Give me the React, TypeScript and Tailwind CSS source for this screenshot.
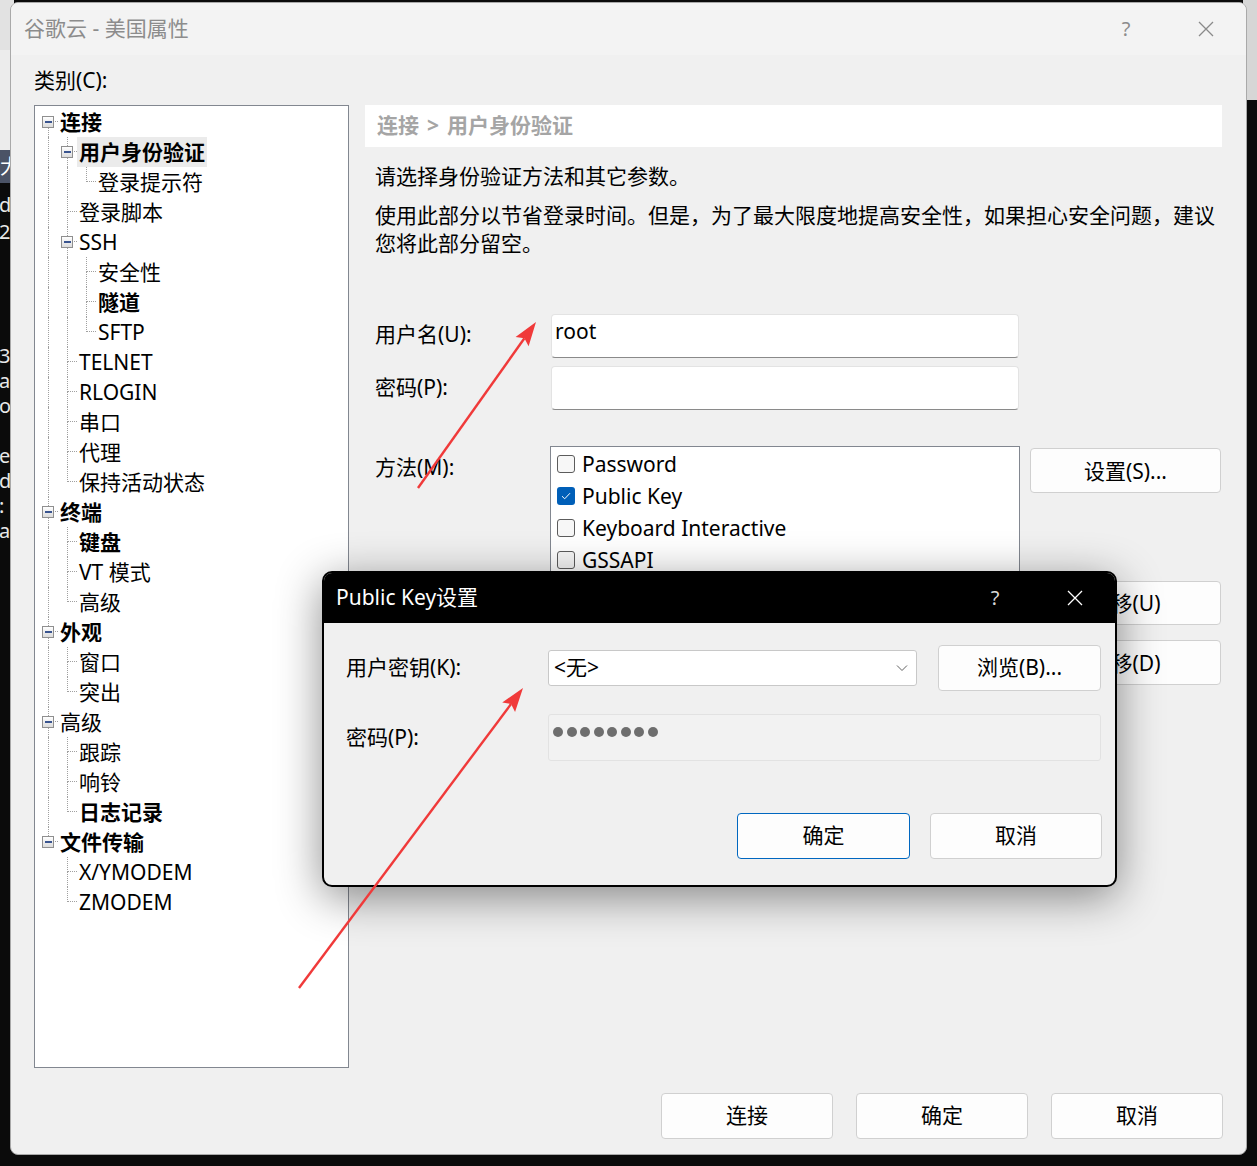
import type { ReactNode } from "react"

// SecureCRT-style session properties window with the "Public Key设置" sub-dialog on top.

const FONT = "font-['Noto_Sans','Noto_Sans_CJK_SC',sans-serif]"

type TreeNode = { label: string; bold?: boolean; selected?: boolean; children?: TreeNode[] }
type Row = { node: TreeNode; depth: number; hasNext: boolean; firstRoot: boolean; trail: boolean[] }

const tree: TreeNode[] = [
  {
    label: "连接",
    bold: true,
    children: [
      { label: "用户身份验证", bold: true, selected: true, children: [{ label: "登录提示符" }] },
      { label: "登录脚本" },
      { label: "SSH", children: [{ label: "安全性" }, { label: "隧道", bold: true }, { label: "SFTP" }] },
      { label: "TELNET" },
      { label: "RLOGIN" },
      { label: "串口" },
      { label: "代理" },
      { label: "保持活动状态" },
    ],
  },
  { label: "终端", bold: true, children: [{ label: "键盘", bold: true }, { label: "VT 模式" }, { label: "高级" }] },
  { label: "外观", bold: true, children: [{ label: "窗口" }, { label: "突出" }] },
  { label: "高级", children: [{ label: "跟踪" }, { label: "响铃" }, { label: "日志记录", bold: true }] },
  { label: "文件传输", bold: true, children: [{ label: "X/YMODEM" }, { label: "ZMODEM" }] },
]

function flatten(nodes: TreeNode[], depth: number, trail: boolean[], out: Row[]) {
  nodes.forEach((node, i) => {
    const hasNext = i < nodes.length - 1
    out.push({ node, depth, hasNext, firstRoot: depth === 0 && i === 0, trail })
    if (node.children) flatten(node.children, depth + 1, [...trail, hasNext], out)
  })
  return out
}

const rows = flatten(tree, 0, [], [])

function ExpandBox() {
  return (
    <div className="absolute left-[3px] top-[9px] flex h-[12px] w-[12px] items-center justify-center border border-[#8f8f8f] bg-gradient-to-b from-white to-[#dcdcdc]">
      <div className="h-[1.5px] w-[7px] bg-[#3a5590]" />
    </div>
  )
}

function TreeRow({ row }: { row: Row }) {
  const { node } = row
  return (
    <div className="flex h-[30px]">
      {row.trail.map((cont, i) => (
        <div key={i} className="w-[19px] shrink-0">
          {cont && <div className="ml-[9px] h-full border-l border-dotted border-[#a0a0a0]" />}
        </div>
      ))}
      <div className="relative w-[19px] shrink-0">
        <div
          className={`ml-[9px] h-[15px] border-b border-dotted border-[#a0a0a0] ${row.firstRoot ? "" : "border-l"}`}
        />
        {row.hasNext && <div className="ml-[9px] h-[15px] border-l border-dotted border-[#a0a0a0]" />}
        {node.children && <ExpandBox />}
      </div>
      <span
        className={`h-[30px] whitespace-nowrap px-[2px] text-[21px] leading-[30px] text-black ${
          node.bold ? "font-bold" : ""
        } ${node.selected ? "bg-[#ebebeb]" : ""}`}
      >
        {node.label}
      </span>
    </div>
  )
}

function CloseIcon({ color, size = 16 }: { color: string; size?: number }) {
  return (
    <svg width={size} height={size} viewBox="0 0 16 16" fill="none">
      <path d="M1 1L15 15M15 1L1 15" stroke={color} strokeWidth="1.3" />
    </svg>
  )
}

function Button({ children, className = "", primary = false }: { children: ReactNode; className?: string; primary?: boolean }) {
  return (
    <button
      className={`flex items-center justify-center rounded-[4px] border bg-[#fdfdfd] text-[21px] text-black ${
        primary ? "border-[#0067c0]" : "border-[#d0d0d0]"
      } ${className}`}
    >
      {children}
    </button>
  )
}

function Checkbox({ checked }: { checked?: boolean }) {
  return checked ? (
    <span className="flex h-[18px] w-[18px] items-center justify-center rounded-[3px] bg-[#005fb8]">
      <svg width="10" height="8" viewBox="0 0 10 8" fill="none">
        <path d="M1 4.2L3.7 6.8L9 1.2" stroke="white" strokeWidth="1" />
      </svg>
    </span>
  ) : (
    <span className="h-[18px] w-[18px] rounded-[3px] border border-[#5c5c5c] bg-[#f7f7f7]" />
  )
}

function Arrow({ x1, y1, x2, y2 }: { x1: number; y1: number; x2: number; y2: number }) {
  const len = Math.hypot(x2 - x1, y2 - y1)
  const ux = (x2 - x1) / len
  const uy = (y2 - y1) / len
  const bx = x2 - ux * 24
  const by = y2 - uy * 24
  const nx = -uy
  const ny = ux
  const head = `${x2},${y2} ${bx + nx * 8},${by + ny * 8} ${x2 - ux * 20},${y2 - uy * 20} ${bx - nx * 8},${by - ny * 8}`
  return (
    <g>
      <line x1={x1} y1={y1} x2={x2 - ux * 20} y2={y2 - uy * 20} stroke="#f03a3a" strokeWidth="2.4" />
      <polygon points={head} fill="#f03a3a" />
    </g>
  )
}

const termBits: [number, string][] = [
  [205, "d"],
  [232, "2("],
  [356, "34"],
  [381, "al"],
  [406, "o("],
  [456, "er"],
  [481, "d"],
  [506, ":"],
  [531, "a"],
]

export default function App() {
  return (
    <div className={`relative h-[1166px] w-[1257px] overflow-hidden bg-[#0b0b0b] ${FONT}`}>
      {/* desktop behind the window */}
      <div className="absolute left-0 top-0 h-[50px] w-[14px] bg-[#e2e2e2]" />
      <div className="absolute left-0 top-[50px] h-[100px] w-[14px] bg-[#ececec]" />
      <div className="absolute left-0 top-[150px] flex h-[33px] w-[14px] items-center bg-[#4b5366] text-[20px] text-white">
        大
      </div>
      {termBits.map(([y, t]) => (
        <span key={y} className="absolute left-[-1px] text-[20px] leading-[24px] text-[#e8e8e8]" style={{ top: y - 12 }}>
          {t}
        </span>
      ))}
      <div className="absolute right-0 top-0 h-[100px] w-[14px] bg-[#d6d6d6]" />

      {/* main properties window */}
      <div className="absolute left-[10px] top-[2px] flex h-[1153px] w-[1237px] flex-col overflow-hidden rounded-[8px] border border-[#a9a9a9] bg-[#f0f0f0]">
        <div className="flex h-[52px] shrink-0 items-center bg-[#f3f3f3] pl-[13px]">
          <span className="text-[21px] text-[#8c8c8c]">谷歌云 - 美国属性</span>
          <div className="ml-auto flex">
            <span className="flex w-[80px] items-center justify-center text-[20px] text-[#8c8c8c]">?</span>
            <span className="flex w-[80px] items-center justify-center">
              <CloseIcon color="#8a8a8a" />
            </span>
          </div>
        </div>

        <div className="flex flex-1 flex-col px-[23px] pt-[12px]">
          <div className="h-[26px] text-[21px] leading-[26px] text-black">类别(C):</div>
          <div className="mt-[12px] flex gap-[16px]">
            <div className="h-[963px] w-[315px] shrink-0 border border-[#828790] bg-white pl-[4px] pt-[1px]">
              {rows.map((r, i) => (
                <TreeRow key={i} row={r} />
              ))}
            </div>

            <div className="w-[857px] shrink-0">
              <div className="flex h-[42px] items-center gap-[8px] bg-white pl-[12px] text-[21px] font-bold text-[#a5a5a5]">
                <span>连接</span>
                <span>&gt;</span>
                <span>用户身份验证</span>
              </div>
              <div className="pl-[10px] text-[21px] leading-[28px] text-black">
                <p className="mt-[15px]">请选择身份验证方法和其它参数。</p>
                <p className="mt-[11px]">
                  使用此部分以节省登录时间。但是，为了最大限度地提高安全性，如果担心安全问题，建议您将此部分留空。
                </p>

                <div className="mt-[57px] flex items-center">
                  <span className="w-[176px] shrink-0 pb-[4px]">用户名(U):</span>
                  <div className="h-[44px] w-[468px] rounded-[4px] border border-[#e3e3e3] border-b-[#8a8a8a] bg-white px-[3px] pt-[1px] leading-[30px]">
                    root
                  </div>
                </div>
                <div className="mt-[8px] flex items-center">
                  <span className="w-[176px] shrink-0 pb-[2px]">密码(P):</span>
                  <div className="h-[44px] w-[468px] rounded-[4px] border border-[#e3e3e3] border-b-[#8a8a8a] bg-white" />
                </div>

                <div className="mt-[36px] flex items-start">
                  <span className="w-[175px] shrink-0 pt-[6px] leading-[30px]">方法(M):</span>
                  <div className="h-[140px] w-[470px] shrink-0 border border-[#828790] bg-white pl-[6px] pt-[1px]">
                    {[
                      ["Password", false],
                      ["Public Key", true],
                      ["Keyboard Interactive", false],
                      ["GSSAPI", false],
                    ].map(([label, on]) => (
                      <div key={label as string} className="flex h-[32px] items-center gap-[7px]">
                        <Checkbox checked={on as boolean} />
                        <span className="leading-[32px]">{label}</span>
                      </div>
                    ))}
                  </div>
                  <div className="ml-[10px] flex flex-col">
                    <Button className="mt-[2px] h-[45px] w-[191px]">设置(S)...</Button>
                    <Button className="mt-[88px] h-[44px] w-[191px]">上移(U)</Button>
                    <Button className="mt-[15px] h-[45px] w-[191px]">下移(D)</Button>
                  </div>
                </div>
              </div>
            </div>
          </div>

          <div className="mt-[25px] flex justify-end gap-[23px]">
            <Button className="h-[46px] w-[172px]">连接</Button>
            <Button className="h-[46px] w-[172px]">确定</Button>
            <Button className="h-[46px] w-[172px]">取消</Button>
          </div>
        </div>
      </div>

      {/* Public Key settings dialog */}
      <div className="absolute left-[322px] top-[571px] flex h-[316px] w-[795px] flex-col overflow-hidden rounded-[10px] border-2 border-black bg-[#f0f0f0] shadow-[0_10px_45px_rgba(0,0,0,0.45)]">
        <div className="flex h-[50px] shrink-0 items-center bg-black pl-[12px]">
          <span className="text-[21px] text-white">Public Key设置</span>
          <div className="ml-auto flex">
            <span className="flex w-[80px] items-center justify-center text-[20px] text-[#d8d8d8]">?</span>
            <span className="flex w-[80px] items-center justify-center">
              <CloseIcon color="#ffffff" />
            </span>
          </div>
        </div>
        <div className="flex flex-1 flex-col pl-[22px] pr-[13px] pt-[22px] text-[21px] text-black">
          <div className="flex h-[46px] items-center">
            <span className="w-[202px] shrink-0">用户密钥(K):</span>
            <div className="flex h-[36px] w-[369px] items-center rounded-[3px] border border-[#c8c8c8] bg-white pl-[5px] pr-[8px]">
              <span>&lt;无&gt;</span>
              <svg className="ml-auto" width="12" height="8" viewBox="0 0 12 8" fill="none">
                <path d="M1 1.5L6 6.5L11 1.5" stroke="#606060" strokeWidth="1" />
              </svg>
            </div>
            <Button className="ml-[21px] h-[46px] w-[163px]">浏览(B)...</Button>
          </div>
          <div className="mt-[23px] flex items-center">
            <span className="w-[202px] shrink-0">密码(P):</span>
            <div className="flex h-[47px] w-[553px] gap-[3.5px] rounded-[3px] border border-[#e2e2e2] bg-[#f2f2f2] pl-[4px] pt-[12px]">
              {Array.from({ length: 8 }).map((_, i) => (
                <span key={i} className="h-[10px] w-[10px] rounded-full bg-[#6e6e6e]" />
              ))}
            </div>
          </div>
          <div className="mt-[52px] flex justify-end gap-[20px]">
            <Button primary className="h-[46px] w-[173px]">确定</Button>
            <Button className="h-[46px] w-[172px]">取消</Button>
          </div>
        </div>
      </div>

      {/* red annotation arrows */}
      <svg className="pointer-events-none absolute left-0 top-0" width="1257" height="1166">
        <Arrow x1={418} y1={488} x2={536} y2={322} />
        <Arrow x1={299} y1={988} x2={523} y2={688} />
      </svg>
    </div>
  )
}
